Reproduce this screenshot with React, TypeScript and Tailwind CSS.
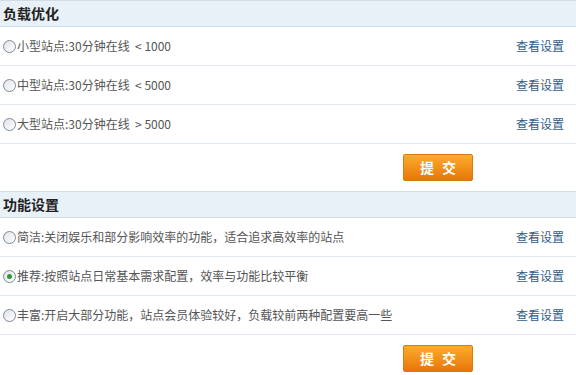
import React from "react";

const font = { fontFamily: '"Noto Sans CJK SC", "Liberation Sans", sans-serif' };

function Radio({ checked }: { checked?: boolean }) {
  return (
    <span className="inline-flex w-[13px] h-[13px] mr-[1px] rounded-full border border-[#7d8a99] bg-gradient-to-br from-[#dfe3e8] to-white items-center justify-center shrink-0">
      {checked ? <span className="w-[5px] h-[5px] rounded-full bg-[#2f9b2f]" /> : null}
    </span>
  );
}

function Row({ label, checked }: { label: string; checked?: boolean }) {
  return (
    <div className="flex items-center h-[39px] border-b border-[#dfe6ee] pl-[3px] pr-[12px]">
      <Radio checked={checked} />
      <span className="text-[12px] text-[#555] whitespace-pre">{label}</span>
      <span className="ml-auto text-[12px] text-[#2f5d8a]">查看设置</span>
    </div>
  );
}

function Header({ title }: { title: string }) {
  return (
    <div className="h-[27px] flex items-center pl-[3px] bg-[#e8f0f8] border-t border-b border-[#d2dce6] text-[14px] font-bold text-[#222]">
      {title}
    </div>
  );
}

function Submit() {
  return (
    <div className="h-[47px] flex items-start pt-[10px] pl-[403px]">
      <button className="w-[70px] h-[27px] rounded-[2px] border border-[#d77a12] bg-gradient-to-b from-[#fbac2a] to-[#e87509] text-white font-bold text-[14px] tracking-[8px] pl-[8px]">
        提交
      </button>
    </div>
  );
}

const load = [
  "小型站点:30分钟在线  < 1000",
  "中型站点:30分钟在线  < 5000",
  "大型站点:30分钟在线  > 5000",
];

const func = [
  "简洁:关闭娱乐和部分影响效率的功能，适合追求高效率的站点",
  "推荐:按照站点日常基本需求配置，效率与功能比较平衡",
  "丰富:开启大部分功能，站点会员体验较好，负载较前两种配置要高一些",
];

export default function App() {
  return (
    <div className="w-[576px] h-[375px] bg-white overflow-hidden" style={font}>
      <Header title="负载优化" />
      {load.map((l) => (
        <Row key={l} label={l} />
      ))}
      <Submit />
      <Header title="功能设置" />
      {func.map((l, i) => (
        <Row key={l} label={l} checked={i === 1} />
      ))}
      <Submit />
    </div>
  );
}
